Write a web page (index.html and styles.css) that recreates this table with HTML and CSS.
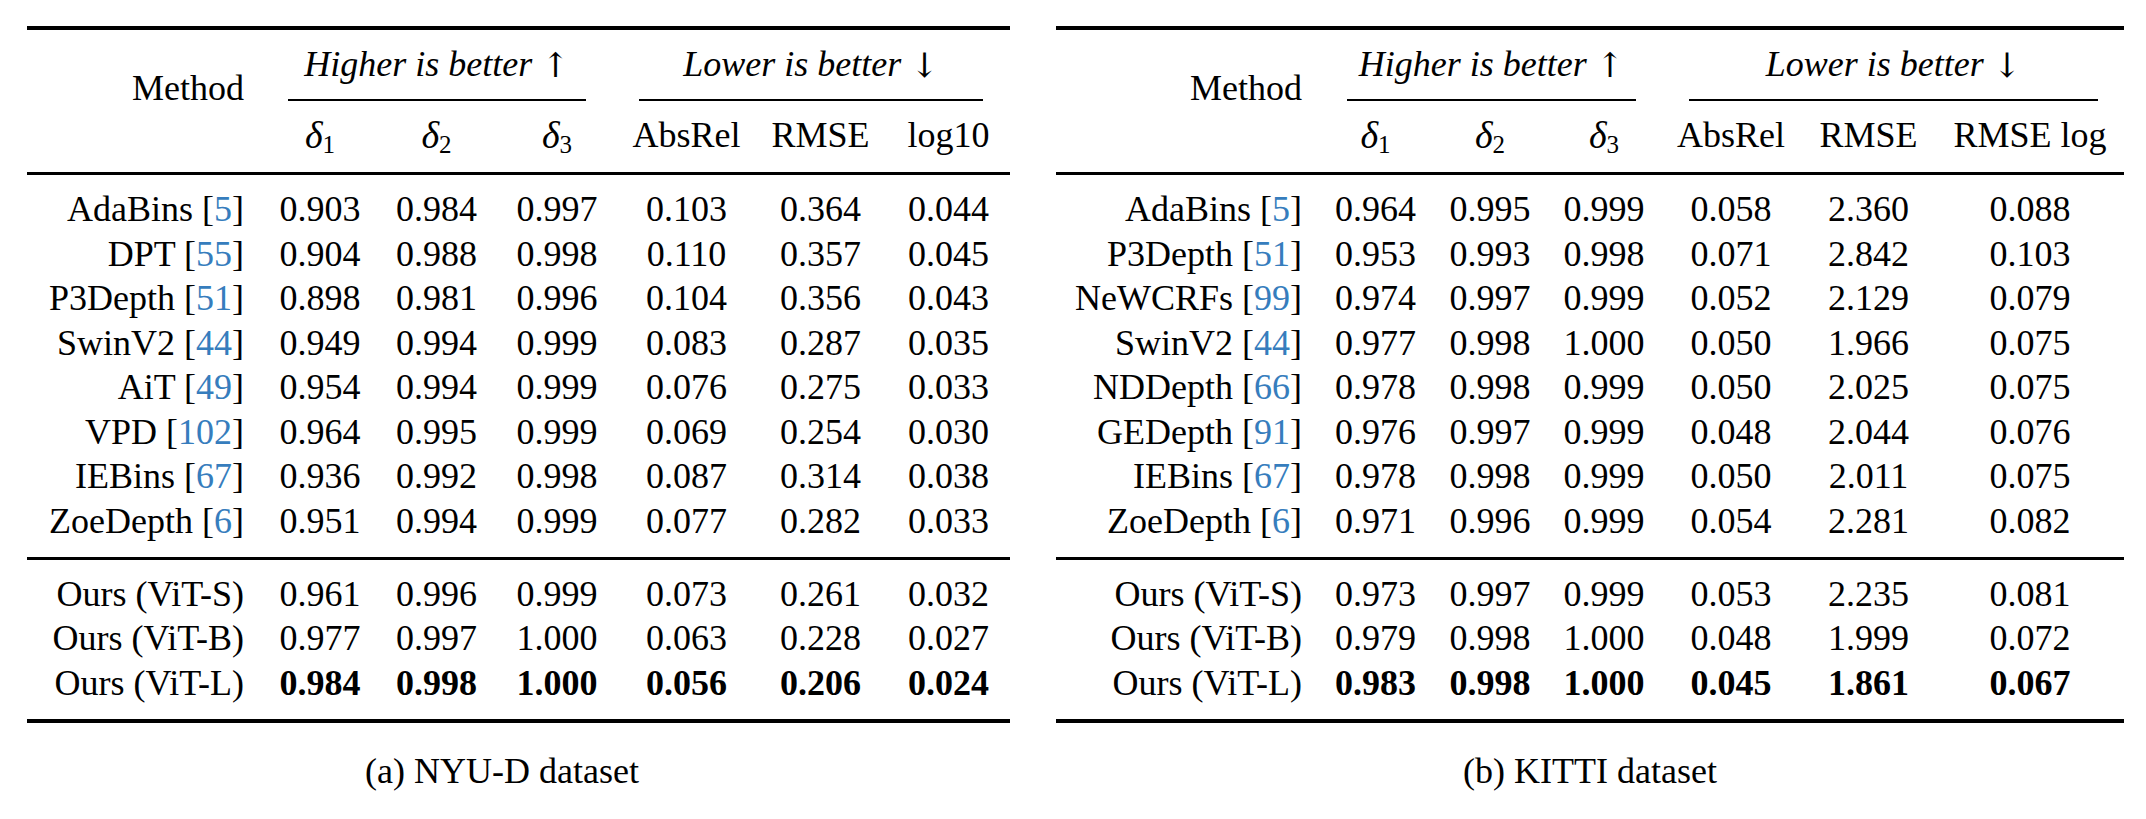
FILE: index.html
```html
<!DOCTYPE html>
<html>
<head>
<meta charset="utf-8">
<link rel="stylesheet" href="styles.css">
</head>
<body>
<div class="page">
  <div class="sub nyu">
    <div class="tbl">
      <div class="head grid">
        <div class="method">Method</div>
        <div class="grp grp-hi"><div class="cmid">Higher is better <span class="arr">↑</span></div></div>
        <div class="grp grp-lo"><div class="cmid">Lower is better <span class="arr">↓</span></div></div>
        <div class="sym"><i>δ</i><sub>1</sub></div>
        <div class="sym"><i>δ</i><sub>2</sub></div>
        <div class="sym"><i>δ</i><sub>3</sub></div>
        <div class="sym">AbsRel</div>
        <div class="sym">RMSE</div>
        <div class="sym">log10</div>
      </div>
      <div class="body body-prior grid">
        <div class="m">AdaBins [<span class="cite">5</span>]</div><div>0.903</div><div>0.984</div><div>0.997</div><div>0.103</div><div>0.364</div><div>0.044</div>
        <div class="m">DPT [<span class="cite">55</span>]</div><div>0.904</div><div>0.988</div><div>0.998</div><div>0.110</div><div>0.357</div><div>0.045</div>
        <div class="m">P3Depth [<span class="cite">51</span>]</div><div>0.898</div><div>0.981</div><div>0.996</div><div>0.104</div><div>0.356</div><div>0.043</div>
        <div class="m">SwinV2 [<span class="cite">44</span>]</div><div>0.949</div><div>0.994</div><div>0.999</div><div>0.083</div><div>0.287</div><div>0.035</div>
        <div class="m">AiT [<span class="cite">49</span>]</div><div>0.954</div><div>0.994</div><div>0.999</div><div>0.076</div><div>0.275</div><div>0.033</div>
        <div class="m">VPD [<span class="cite">102</span>]</div><div>0.964</div><div>0.995</div><div>0.999</div><div>0.069</div><div>0.254</div><div>0.030</div>
        <div class="m">IEBins [<span class="cite">67</span>]</div><div>0.936</div><div>0.992</div><div>0.998</div><div>0.087</div><div>0.314</div><div>0.038</div>
        <div class="m">ZoeDepth [<span class="cite">6</span>]</div><div>0.951</div><div>0.994</div><div>0.999</div><div>0.077</div><div>0.282</div><div>0.033</div>
      </div>
      <div class="body body-ours grid">
        <div class="m">Ours (ViT-S)</div><div>0.961</div><div>0.996</div><div>0.999</div><div>0.073</div><div>0.261</div><div>0.032</div>
        <div class="m">Ours (ViT-B)</div><div>0.977</div><div>0.997</div><div>1.000</div><div>0.063</div><div>0.228</div><div>0.027</div>
        <div class="m">Ours (ViT-L)</div><div class="b">0.984</div><div class="b">0.998</div><div class="b">1.000</div><div class="b">0.056</div><div class="b">0.206</div><div class="b">0.024</div>
      </div>
    </div>
    <div class="caption">(a) NYU-D dataset</div>
  </div>

  <div class="sub kitti">
    <div class="tbl">
      <div class="head grid">
        <div class="method">Method</div>
        <div class="grp grp-hi"><div class="cmid">Higher is better <span class="arr">↑</span></div></div>
        <div class="grp grp-lo"><div class="cmid">Lower is better <span class="arr">↓</span></div></div>
        <div class="sym"><i>δ</i><sub>1</sub></div>
        <div class="sym"><i>δ</i><sub>2</sub></div>
        <div class="sym"><i>δ</i><sub>3</sub></div>
        <div class="sym">AbsRel</div>
        <div class="sym">RMSE</div>
        <div class="sym">RMSE log</div>
      </div>
      <div class="body body-prior grid">
        <div class="m">AdaBins [<span class="cite">5</span>]</div><div>0.964</div><div>0.995</div><div>0.999</div><div>0.058</div><div>2.360</div><div>0.088</div>
        <div class="m">P3Depth [<span class="cite">51</span>]</div><div>0.953</div><div>0.993</div><div>0.998</div><div>0.071</div><div>2.842</div><div>0.103</div>
        <div class="m">NeWCRFs [<span class="cite">99</span>]</div><div>0.974</div><div>0.997</div><div>0.999</div><div>0.052</div><div>2.129</div><div>0.079</div>
        <div class="m">SwinV2 [<span class="cite">44</span>]</div><div>0.977</div><div>0.998</div><div>1.000</div><div>0.050</div><div>1.966</div><div>0.075</div>
        <div class="m">NDDepth [<span class="cite">66</span>]</div><div>0.978</div><div>0.998</div><div>0.999</div><div>0.050</div><div>2.025</div><div>0.075</div>
        <div class="m">GEDepth [<span class="cite">91</span>]</div><div>0.976</div><div>0.997</div><div>0.999</div><div>0.048</div><div>2.044</div><div>0.076</div>
        <div class="m">IEBins [<span class="cite">67</span>]</div><div>0.978</div><div>0.998</div><div>0.999</div><div>0.050</div><div>2.011</div><div>0.075</div>
        <div class="m">ZoeDepth [<span class="cite">6</span>]</div><div>0.971</div><div>0.996</div><div>0.999</div><div>0.054</div><div>2.281</div><div>0.082</div>
      </div>
      <div class="body body-ours grid">
        <div class="m">Ours (ViT-S)</div><div>0.973</div><div>0.997</div><div>0.999</div><div>0.053</div><div>2.235</div><div>0.081</div>
        <div class="m">Ours (ViT-B)</div><div>0.979</div><div>0.998</div><div>1.000</div><div>0.048</div><div>1.999</div><div>0.072</div>
        <div class="m">Ours (ViT-L)</div><div class="b">0.983</div><div class="b">0.998</div><div class="b">1.000</div><div class="b">0.045</div><div class="b">1.861</div><div class="b">0.067</div>
      </div>
    </div>
    <div class="caption">(b) KITTI dataset</div>
  </div>
</div>
</body>
</html>
```

FILE: styles.css
```css
* { box-sizing: border-box; }

html, body {
  margin: 0;
  background: #fff;
}

body {
  font-family: "Liberation Serif", "Times New Roman", serif;
  font-size: 36px;
  color: #000;
}

.page {
  display: flex;
  align-items: flex-start;
  padding-top: 26px;
  padding-left: 27px;
}

.nyu {
  width: 983px;
  --cols: 235px 116px 117px 124px 135px 133px 123px;
  --mpad: 18px;
  --hi-l: 26px; --hi-r: 33px;
  --lo-l: 20px; --lo-r: 27px;
  --cap-shift: 33px;
}

.kitti {
  width: 1068px;
  margin-left: 46px;
  --cols: 262px 115px 114px 114px 140px 135px 188px;
  --mpad: 16px;
  --hi-l: 29px; --hi-r: 25px;
  --lo-l: 28px; --lo-r: 26px;
  --cap-shift: 0px;
}

.tbl {
  border-top: 4px solid #000;
  border-bottom: 4px solid #000;
}

.grid {
  display: grid;
  grid-template-columns: var(--cols);
}

/* header */
.head {
  border-bottom: 3px solid #000;
}

.method {
  grid-row: span 2;
  text-align: right;
  padding-right: var(--mpad);
  padding-top: 37.5px;
  line-height: 41px;
}

.grp {
  grid-column: span 3;
  padding-top: 14.35px;
}

.cmid {
  line-height: 41px;
  height: 57px;
  padding-bottom: 14px;
  border-bottom: 2px solid #000;
  text-align: center;
  font-style: italic;
}

.grp-hi .cmid { margin: 0 var(--hi-r) 0 var(--hi-l); }
.grp-lo .cmid { margin: 0 var(--lo-r) 0 var(--lo-l); }

.arr {
  font-style: normal;
  font-family: "DejaVu Serif", "Liberation Serif", serif;
  font-size: 34px;
  line-height: 0;
  vertical-align: -1px;
}

.sym {
  text-align: center;
  line-height: 41px;
  padding: 13.85px 0 14.65px;
}

.sym i {
  font-style: italic;
  font-size: 38px;
}

.sym sub {
  font-size: 25px;
  line-height: 0;
  vertical-align: -5px;
  font-style: normal;
}

/* body */
.body > div {
  text-align: center;
  line-height: 44.5px;
}

.body > .m {
  text-align: right;
  padding-right: var(--mpad);
}

.body-prior {
  padding: 12.6px 0 13.55px;
  border-bottom: 3px solid #000;
}

.body-ours {
  padding: 11.6px 0 13.9px;
}

.cite {
  color: #367dbd;
}

.b {
  font-weight: bold;
}

.caption {
  margin-top: 27.85px;
  line-height: 41px;
  text-align: center;
  padding-right: var(--cap-shift);
}
```
